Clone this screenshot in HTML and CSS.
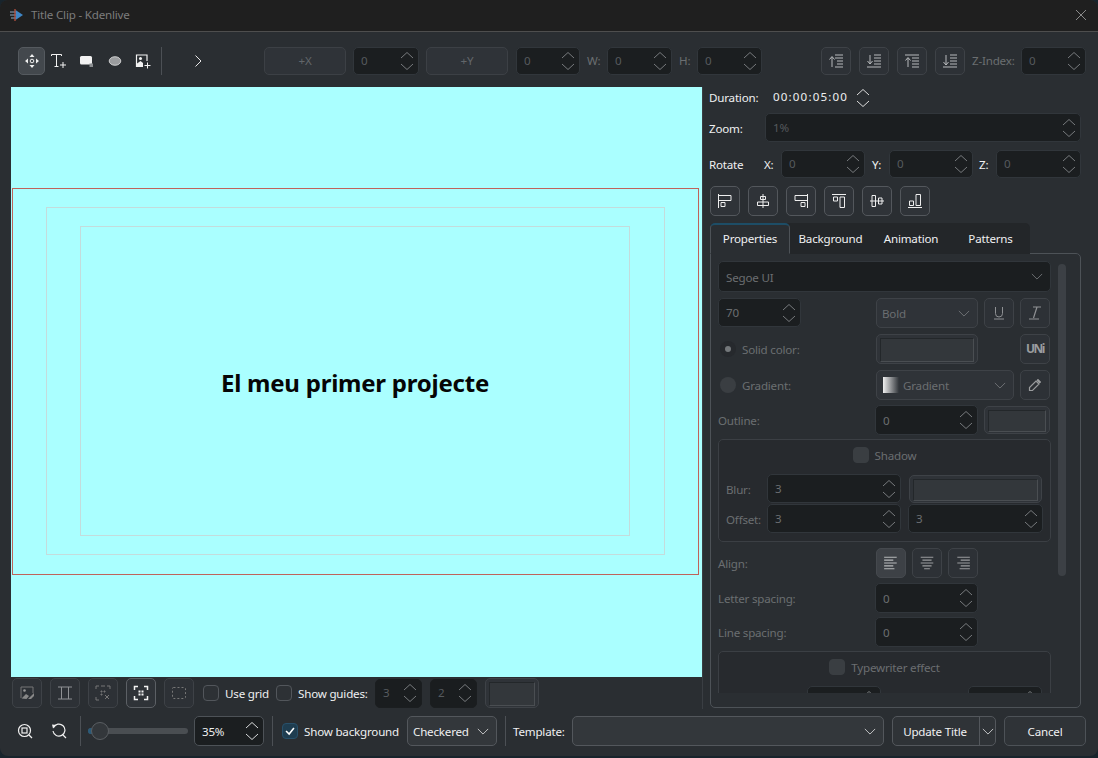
FILE: index.html
```html
<!DOCTYPE html>
<html lang="en">
<head>
<meta charset="utf-8">
<title>Title Clip - Kdenlive</title>
<link rel="stylesheet" href="styles.css">
</head>
<body>
<svg class="defs" aria-hidden="true">
  <symbol id="arrows" viewBox="0 0 14 22"><path d="M1 8 7 2.500 13 8M1 14 7 19.500 13 14" fill="none" stroke="currentColor"/></symbol>
  <symbol id="down" viewBox="0 0 14 8"><path d="M1 1 7 7 13 1" fill="none" stroke="currentColor"/></symbol>
</svg>
<div class="window">
  <header class="titlebar">
    <svg class="logo" viewBox="0 0 14 12"><path d="M0 3h7M0 6h7M1 9h6" stroke="#8fa9c4" stroke-width="1.200"/><path d="M5.500 1 13 6l-7.500 5z" fill="#3f86c6"/><path d="M5 0v12" stroke="#b5503f" stroke-width="1.300"/></svg>
    <span class="title">Title Clip - Kdenlive</span>
    <svg class="close" viewBox="0 0 10 10"><path d="M0 0 10 10M10 0 0 10" stroke="#8a8a8a" stroke-width="1"/></svg>
  </header>

  <div class="toolbar">
    <button class="tool on"><svg viewBox="0 0 16 16"><path d="M8 1 10.500 4h-5zM8 15 5.500 12h5zM1 8 4 5.500v5zM15 8 12 10.500v-5z" fill="#eee"/><circle cx="8" cy="8" r="1.800" fill="none" stroke="#eee"/></svg></button>
    <button class="tool"><svg viewBox="0 0 16 16"><path d="M.5 3V1.500h10V3M5.500 1.500V13M3.500 13.500h4M9 12h6M12 9v6" fill="none" stroke="#f2f2f2"/></svg></button>
    <button class="tool"><svg viewBox="0 0 16 16"><rect x="1" y="3" width="12" height="8.500" rx="1.500" fill="#f2f2f2"/><rect x="10.500" y="10.500" width="3.500" height="3.500" fill="#8a8d90"/></svg></button>
    <button class="tool"><svg viewBox="0 0 16 16"><ellipse cx="8" cy="8" rx="5.800" ry="4.300" fill="#9a9c9e" stroke="#e4e4e4" stroke-width=".8"/></svg></button>
    <button class="tool"><svg viewBox="0 0 16 16"><path d="M1.500 14V2h10.500v6" fill="none" stroke="#f2f2f2" stroke-width="1.200"/><circle cx="5.500" cy="5.500" r="1.500" fill="#f2f2f2"/><path d="M2 14V10.500L5.500 8 8 10v4z" fill="#f2f2f2"/><path d="M9.500 12.500h6M12.500 9.500v6" stroke="#f2f2f2"/></svg></button>
    <i class="sep s4"></i>
    <button class="tool ml22"><svg viewBox="0 0 16 16"><path d="M5.500 2.500 11 8l-5.500 5.500" fill="none" stroke="#e8e8e8"/></svg></button>
    <button class="btn off w82 ml52">+X</button>
    <div class="spin w66 ml7"><span>0</span><svg><use href="#arrows"/></svg></div>
    <button class="btn off w82 ml7">+Y</button>
    <div class="spin w64 ml8"><span>0</span><svg><use href="#arrows"/></svg></div>
    <span class="lab dim w20 ml7">W:</span>
    <div class="spin w65"><span>0</span><svg><use href="#arrows"/></svg></div>
    <span class="lab dim w18 ml7">H:</span>
    <div class="spin w65"><span>0</span><svg><use href="#arrows"/></svg></div>
    <button class="ico off ml59"><svg viewBox="0 0 16 16"><path d="M7 2h8M7 5h8M9 8h6M9 11h6M7 14h8M4 14V4M1.500 6.500 4 3.500l2.500 3" fill="none" stroke="#b8babc"/></svg></button>
    <button class="ico off ml8"><svg viewBox="0 0 16 16"><path d="M8 2h7M8 5h7M8 8h7M8 11h7M1 14h14M4 2v9M1.500 8 4 11l2.500-3" fill="none" stroke="#b8babc"/></svg></button>
    <button class="ico off ml8"><svg viewBox="0 0 16 16"><path d="M1 2h14M8 5h7M8 8h7M8 11h7M8 14h7M4 14V5M1.500 7.500 4 4.500l2.500 3" fill="none" stroke="#b8babc"/></svg></button>
    <button class="ico off ml8"><svg viewBox="0 0 16 16"><path d="M8 2h7M8 5h7M8 8h7M8 11h7M1 14h14M4 2v10M1.500 9 4 12l2.500-3" fill="none" stroke="#b8babc"/></svg></button>
    <span class="lab dim w49 ml7">Z-Index:</span>
    <div class="spin w65"><span>0</span><svg><use href="#arrows"/></svg></div>
  </div>

  <div class="main">
    <section class="left">
      <div class="canvas">
        <div class="frame">
          <div class="guide">
            <div class="guide inner"><span class="headline">El meu primer projecte</span></div>
          </div>
        </div>
      </div>
      <div class="canvasbar">
        <button class="ico off"><svg viewBox="0 0 16 16"><path d="M2 13V2h12v6" fill="none" stroke="#777"/><circle cx="5.500" cy="5.500" r="1.300" fill="#999"/><path d="M2.500 13.500 7 9l3 2-2.500 3zM9 14l6-6v3l-3 3z" fill="#888"/></svg></button>
        <button class="ico off ml8"><svg viewBox="0 0 16 16"><path d="M1 2h14M1 14h14M4.500 2v12M11.500 2v12" fill="none" stroke="#8f9194"/></svg></button>
        <button class="ico off ml8"><svg viewBox="0 0 16 16"><path d="M1 4V1h3M12 1h3v3M1 12v3h3" fill="none" stroke="#777"/><path d="M6 1h4M6 6h1v1H6zM9 6h1v1H9zM6 9h1v1H6zM10 10l4 4M14 10l-4 4" fill="none" stroke="#777"/></svg></button>
        <button class="ico sel ml8"><svg viewBox="0 0 16 16"><path d="M1.500 5V1.500H5M11 1.500h3.500V5M1.500 11v3.500H5M11 14.500h3.500V11" fill="none" stroke="#f2f2f2" stroke-width="1.500"/><path d="M5.500 5.500h2v2h-2zM8.500 5.500h2v2h-2zM5.500 8.500h2v2h-2zM8.500 8.500h2v2h-2z" fill="#f2f2f2"/></svg></button>
        <button class="ico off ml8"><svg viewBox="0 0 16 16"><rect x="1.500" y="2.500" width="13" height="11" rx="1" fill="none" stroke="#777" stroke-dasharray="2 2"/></svg></button>
        <span class="check ml9"></span>
        <span class="lab w45 ml6">Use grid</span>
        <span class="check ml6"></span>
        <span class="lab w71 ml6">Show guides:</span>
        <div class="spin w47 ml6 sunk"><span>3</span><svg><use href="#arrows"/></svg></div>
        <div class="spin w47 ml8 sunk"><span>2</span><svg><use href="#arrows"/></svg></div>
        <div class="swatch w54 ml8"></div>
      </div>
    </section>

    <aside class="right">
      <div class="durrow">
        <span class="lab bright w64">Duration:</span>
        <span class="code">00:00:05:00</span>
        <svg class="durarrows"><use href="#arrows"/></svg>
      </div>
      <div class="zoomrow">
        <span class="lab bright w56">Zoom:</span>
        <div class="spin w316 h29"><span>1%</span><svg><use href="#arrows"/></svg></div>
      </div>
      <div class="rotrow">
        <span class="lab bright w55">Rotate</span>
        <span class="lab bright w17">X:</span>
        <div class="spin w84"><span>0</span><svg><use href="#arrows"/></svg></div>
        <span class="lab bright w17 ml7">Y:</span>
        <div class="spin w84"><span>0</span><svg><use href="#arrows"/></svg></div>
        <span class="lab bright w17 ml6">Z:</span>
        <div class="spin w85"><span>0</span><svg><use href="#arrows"/></svg></div>
      </div>
      <div class="alignrow">
        <button class="ico"><svg viewBox="0 0 16 16"><path d="M1.500 1v14M1.500 2.500H14v5H1.500M4 9.500h4v4H4z" fill="none" stroke="#eee"/></svg></button>
        <button class="ico"><svg viewBox="0 0 16 16"><path d="M8 1v14M5.500 3.500h5v3h-5zM2.500 9h11v3.500h-11z" fill="#2f3338" stroke="#eee"/></svg></button>
        <button class="ico"><svg viewBox="0 0 16 16"><path d="M14.500 1v14M14.500 2.500H2v5h12.500M8 9.500h4v4H8z" fill="none" stroke="#eee"/></svg></button>
        <button class="ico"><svg viewBox="0 0 16 16"><path d="M1 1.500h14M2.500 4h4v4h-4zM9 4h4.500v10.500H9z" fill="none" stroke="#eee"/></svg></button>
        <button class="ico"><svg viewBox="0 0 16 16"><path d="M1 8h14M3 2.500h3.500v11H3zM9.500 5H13v6H9.500z" fill="#2f3338" stroke="#eee"/></svg></button>
        <button class="ico"><svg viewBox="0 0 16 16"><path d="M1 14.500h14M2.500 8h4v4.500h-4zM9 1.500h4.500v11H9z" fill="none" stroke="#eee"/></svg></button>
      </div>
      <div class="tabs">
        <span class="tab active">Properties</span>
        <span class="tab t2">Background</span>
        <span class="tab t3">Animation</span>
        <span class="tab t4">Patterns</span>
      </div>
      <div class="tabpanel">
        <div class="scrollarea">
          <div class="form">
            <div class="combo dark h31"><span>Segoe UI</span><svg><use href="#down"/></svg></div>
            <div class="row">
              <div class="spin w82 h29"><span class="grey">70</span><svg><use href="#arrows"/></svg></div>
              <div class="combo off"><span>Bold</span><svg><use href="#down"/></svg></div>
              <button class="ico off"><svg viewBox="0 0 16 16"><path d="M4.500 2v6.500a3.500 3.500 0 0 0 7 0V2M3 14h10" fill="none" stroke="#8f9194"/></svg></button>
              <button class="ico off"><svg viewBox="0 0 16 16"><path d="M6 2h8M10 2 6.500 13M2 14h10" fill="none" stroke="#8f9194" stroke-width="1.200"/></svg></button>
            </div>
            <div class="row">
              <span class="optlabel"><i class="radio dotted"></i><span class="lab dim">Solid color:</span></span>
              <div class="swatch"></div>
              <i></i>
              <button class="ico off col4 un">UNi</button>
            </div>
            <div class="row">
              <span class="optlabel wide"><i class="radio"></i><span class="lab dim">Gradient:</span></span>
              <div class="combo off span2"><i class="grad"></i><span>Gradient</span><svg><use href="#down"/></svg></div>
              <button class="ico off"><svg viewBox="0 0 16 16"><path d="M2.500 13.500v-3L9 4l3 3-6.500 6.500zM10.500 2.500 13.500 5.500" fill="none" stroke="#9a9c9e" stroke-width="1.200"/><path d="M9.500 3.500 11 2l3 3-1.500 1.500z" fill="#9a9c9e"/></svg></button>
            </div>
            <div class="row mt5">
              <span class="lab dim">Outline:</span>
              <div class="spin outset"><span class="grey">0</span><svg><use href="#arrows"/></svg></div>
              <div class="swatch span2 thin"></div>
            </div>
            <div class="group mt4 shadow">
              <div class="grouphead"><span class="check off"></span><span class="lab dim">Shadow</span></div>
              <div class="shadowgrid">
                <span class="lab dim">Blur:</span>
                <div class="spin h29"><span class="grey">3</span><svg><use href="#arrows"/></svg></div>
                <div class="swatch thin"></div>
                <span class="lab dim">Offset:</span>
                <div class="spin h29"><span class="grey">3</span><svg><use href="#arrows"/></svg></div>
                <div class="spin h29"><span class="grey">3</span><svg><use href="#arrows"/></svg></div>
              </div>
            </div>
            <div class="row">
              <span class="lab dim">Align:</span>
              <div class="trio">
                <button class="ico sel2"><svg viewBox="0 0 14 12"><path d="M1 1h11M1 3.500h8M1 6h11M1 8.500h8M1 11h9" stroke="#b8babc" fill="none"/></svg></button>
                <button class="ico off"><svg viewBox="0 0 14 12"><path d="M1.500 1h11M3 3.500h8M1.500 6h11M3 8.500h8M4.500 11h5" stroke="#9a9c9e" fill="none"/></svg></button>
                <button class="ico off"><svg viewBox="0 0 14 12"><path d="M2 1h11M5 3.500h8M2 6h11M5 8.500h8M4 11h9" stroke="#9a9c9e" fill="none"/></svg></button>
              </div>
            </div>
            <div class="row mt5">
              <span class="lab dim">Letter spacing:</span>
              <div class="spin outset"><span class="grey">0</span><svg><use href="#arrows"/></svg></div>
            </div>
            <div class="row mt4">
              <span class="lab dim">Line spacing:</span>
              <div class="spin outset"><span class="grey">0</span><svg><use href="#arrows"/></svg></div>
            </div>
            <div class="group mt4 type">
              <div class="grouphead"><span class="check off"></span><span class="lab dim">Typewriter effect</span></div>
              <div class="typerow">
                <div class="spin w74"><span></span><svg><use href="#arrows"/></svg></div>
                <div class="spin w74"><span></span><svg><use href="#arrows"/></svg></div>
              </div>
            </div>
          </div>
          <div class="scrollbar"><i></i></div>
        </div>
      </div>
    </aside>
  </div>

  <footer class="bottom">
    <button class="tool plain"><svg viewBox="0 0 16 16"><circle cx="7.500" cy="7.500" r="6" fill="none" stroke="#f0f0f0" stroke-width="1.200"/><rect x="5" y="5" width="5" height="5" fill="none" stroke="#f0f0f0" stroke-width="1.200"/><path d="M12 12l3 3" stroke="#f0f0f0" stroke-width="1.200"/></svg></button>
    <button class="tool plain ml6"><svg viewBox="0 0 16 16"><path d="M2.500 4.500A6 6 0 1 1 2 8M12 12l3 3" fill="none" stroke="#f0f0f0" stroke-width="1.200"/><path d="M1 1.500 5.500 2 2 5.500z" fill="#f0f0f0"/></svg></button>
    <i class="sep s7"></i>
    <div class="slider ml7"><b class="fill"></b><b class="knob"></b></div>
    <div class="spin w70 ml6 live"><span>35%</span><svg><use href="#arrows"/></svg></div>
    <i class="sep s8"></i>
    <span class="check ticked ml9"><svg viewBox="0 0 16 16"><path d="M3.500 8 7 11.500 12.500 4.500" fill="none" stroke="#fff" stroke-width="1.800"/></svg></span>
    <span class="lab w96 ml6">Show background</span>
    <div class="combo w90 ml7"><span>Checkered</span><svg><use href="#down"/></svg></div>
    <i class="sep s8"></i>
    <span class="lab w52 ml7">Template:</span>
    <div class="combo w312 ml7"><span></span><svg><use href="#down"/></svg></div>
    <div class="split ml8"><span>Update Title</span><b><svg><use href="#down"/></svg></b></div>
    <button class="btn w82 ml8">Cancel</button>
  </footer>
</div>
</body>
</html>
```
FILE: styles.css
```css
* { box-sizing: border-box; }
html, body { margin: 0; height: 100%; background: #18242c; overflow: hidden; }
body { font: 11.6px/16px "Noto Sans", "Liberation Sans", sans-serif; letter-spacing: -.2px; color: #eff0f1; }
.defs { position: absolute; width: 0; height: 0; }
button { font: inherit; letter-spacing: inherit; color: inherit; padding: 0; margin: 0; }
svg { display: block; }

.window { width: 1098px; height: 756px; background: #2a2e32; border-radius: 8px; overflow: hidden; display: flex; flex-direction: column; }

.titlebar { height: 32px; flex: none; background: #1f1f1f; border-bottom: 1px solid #4e4e4e; display: flex; align-items: center; padding-left: 10px; }
.logo { width: 14px; height: 12px; margin-top: -2px; }
.title { margin-left: 7px; color: #7c7c7c; margin-top: -1px; }
.close { width: 10px; height: 10px; margin-left: auto; margin-right: 12px; margin-top: -2px; }

.toolbar { height: 55px; flex: none; display: flex; align-items: flex-start; padding: 15px 0 0 17px; }
.toolbar > .lab { height: 28px; line-height: 28px; }
.tool { width: 28px; height: 28px; flex: none; border: 1px solid transparent; border-radius: 5px; background: none; display: flex; align-items: center; justify-content: center; }
.tool svg { width: 16px; height: 16px; }
.tool.on { background: #43484d; border-color: #555a5f; width: 27px; margin: 0 0 0 1px; }
.tool.plain { height: 30px; }
.sep { display: block; width: 1px; height: 28px; background: #4c5055; flex: none; }
.s4 { margin-left: 4px; }
.s7 { margin-left: 7px; }
.s8 { margin-left: 8px; }

.btn { height: 28px; border: 1px solid #4d5257; border-radius: 5px; background: #31363b; text-align: center; flex: none; }
.btn.off { background: #2f3338; border-color: #3c4045; color: #62666a; }
.bottom .btn { height: 30px; background: #2f3337; padding-top: 2px; }

.ico { width: 30px; height: 30px; flex: none; border: 1px solid #53575c; border-radius: 5px; background: #2f3338; display: flex; align-items: center; justify-content: center; }
.ico svg { width: 16px; height: 16px; }
.ico.off { border-color: #3e4247; background: #2d3136; }
.ico.sel { border-color: #5c6065; background: #2f3338; }
.ico.sel2 { border-color: #45494e; background: #3d4146; }
.toolbar .ico { height: 28px; }

.spin { height: 28px; flex: none; background: #1b1e20; border: 1px solid #31363b; border-radius: 5px; display: flex; align-items: center; padding-left: 7px; color: #565a5e; }
.spin span { flex: 1; }
.spin svg { width: 14px; height: 22px; margin-right: 4px; color: #777a7d; flex: none; }
.spin .grey { color: #6b6e71; }
.spin.sunk { height: 29px; border-color: #1b1e20; background: #1a1d1f; }
.spin.live { height: 30px; border-color: #4d5257; color: #eff0f1; padding-left: 7px; }
.spin.live svg { color: #d8dadb; }

.combo { height: 30px; flex: none; background: #33373b; border: 1px solid #53575c; border-radius: 5px; display: flex; align-items: center; padding-left: 5px; }
.combo > span { flex: 1; white-space: nowrap; margin-top: 2px; }
.combo > svg { width: 12px; height: 7px; margin-right: 7px; flex: none; color: #d8dadb; }
.combo.off { background: #2f3338; border-color: #3e4247; color: #6b6e71; }
.combo.off > svg { color: #777a7d; }
.combo.dark { background: #1b1e20; border-color: #31363b; color: #6b6e71; padding-left: 7px; }
.combo.dark > svg { color: #777a7d; }
.grad { width: 16px; height: 16px; margin: 0 4px 0 1px; background: linear-gradient(90deg, #f0f0f0, #2f3338); flex: none; }

.lab { white-space: nowrap; flex: none; display: block; margin-top: 2px; }
.toolbar > .lab { margin-top: 0; }
.durrow .lab { margin-top: 0; }
.form .spin span, .bottom .spin span { margin-top: 1px; }
.dim { color: #6b6e71; }
.bright { color: #eff0f1; }

.swatch { height: 30px; border: 1px solid #3e4247; border-radius: 5px; background: #2f3338; padding: 3px; }
.swatch.thin { height: 28px; }
.swatch::after { content: ""; display: block; height: 100%; background: #33373b; border: 1px solid #23272a; border-bottom-color: #4a4e52; border-right-color: #4a4e52; }

.main { display: flex; flex: none; height: 622px; padding-left: 11px; }
.left { width: 692px; flex: none; border-right: 1px solid #3a3e43; display: flex; flex-direction: column; }
.canvas { width: 691px; height: 590px; flex: none; background: #aaffff; padding: 102px 0 0 1px; }
.frame { width: 687px; height: 387px; border: 1px solid #c0635a; padding: 17px 33px; margin-top: -1px; }
.guide { width: 619px; height: 348px; border: 1px solid #c4dcdc; padding: 18px 33px; margin-top: 1px; }
.guide.inner { width: 550px; height: 310px; padding: 0; margin-top: 0; display: flex; align-items: center; justify-content: center; }
.headline { font: 700 24px/30px "Noto Sans", sans-serif; color: #060606; letter-spacing: -.23px; margin-top: 3px; white-space: nowrap; }
.canvasbar { display: flex; align-items: center; height: 30px; margin-top: 1px; padding-left: 1px; }
.canvasbar .lab { margin-top: 1px; }

.check { width: 16px; height: 16px; flex: none; display: block; border: 1px solid #52565b; border-radius: 4px; background: #2d3135; }
.check.off { border-color: #3a3e42; background: #3a3e42; }
.check.ticked { background: #1f3d50; border-color: #28506a; }
.check svg { width: 14px; height: 14px; }

.right { padding-left: 6px; width: 380px; flex: none; }
.durrow { height: 21px; display: flex; align-items: center; }
.code { letter-spacing: 1.150px; width: 83px; margin-top: -1px; }
.durarrows { width: 14px; height: 22px; color: #dcdcdc; }
.zoomrow { display: flex; align-items: center; margin-top: 5px; }
.rotrow { display: flex; align-items: center; margin-top: 8px; }
.alignrow { display: flex; gap: 8px; margin: 8px 0 0 1px; }
.tabs { display: flex; width: 320px; height: 31px; margin: 7px 0 -1px 1px; background: #232629; border-radius: 5px 5px 0 0; position: relative; z-index: 1; }
.tab { height: 31px; line-height: 31px; text-align: center; white-space: nowrap; }
.tab.active { width: 80px; background: #2a2e32; border: 1px solid #4d5257; border-top: 2px solid #1d4d66; border-bottom-color: #2a2e32; border-radius: 5px 5px 0 0; line-height: 28px; }
.t2 { width: 81px; }
.t3 { width: 80px; }
.t4 { width: 79px; }
.tabpanel { width: 371px; height: 455px; margin-left: 1px; border: 1px solid #4d5257; border-radius: 0 5px 5px 5px; }
.scrollarea { display: flex; height: 439px; overflow: hidden; padding: 7px 0 0 7px; }
.form { width: 333px; flex: none; display: flex; flex-direction: column; gap: 6px; }
.row { display: grid; grid-template-columns: 152px 102px 30px 30px; column-gap: 6px; align-items: center; height: 30px; flex: none; }
.row > .spin:first-child { width: 83px; margin-top: -1px; }
.row > .outset { margin-left: -1px; width: 103px; height: 30px; }
.span2 { grid-column: span 2; }
.col4 { grid-column: 4; }
.mt5 { margin-top: -1px; }
.mt4 { margin-top: -2px; }
.form .h31 { height: 31px; flex: none; }
.h29 { height: 29px; }
.optlabel { display: flex; align-items: center; }
.radio { display: block; width: 16px; height: 16px; border-radius: 50%; background: #26292d; margin: 0 6px 0 2px; flex: none; position: relative; }
.optlabel.wide .radio { background: #3a3e42; }
.radio.dotted::after { content: ""; position: absolute; left: 5px; top: 5px; width: 6px; height: 6px; border-radius: 50%; background: #74787b; }
.un { color: #9a9c9e; font-size: 12px; font-weight: 700; letter-spacing: -1.500px; }
.group { width: 333px; flex: none; background: #272a2e; border: 1px solid #3b3f44; border-radius: 5px; }
.shadow { height: 103px; }
.type { height: 80px; }
.grouphead { display: flex; justify-content: center; align-items: center; gap: 6px; height: 16px; margin-top: 7px; }
.shadowgrid { display: grid; grid-template-columns: 41px 134px 142px; margin: 11px 0 0 7px; row-gap: 1px; align-items: center; }
.shadowgrid > :nth-child(3) { margin: 0 1px 0 8px; }
.shadowgrid > :nth-child(6) { margin: 0 0 0 7px; }
.typerow { display: flex; margin: 11px 0 0 88px; gap: 87px; }
.trio { display: flex; gap: 6px; }
.scrollbar { margin: 3px 0 0 7px; width: 8px; }
.scrollbar i { display: block; width: 8px; height: 312px; background: #3c4045; border-radius: 4px; }

.bottom { display: flex; align-items: center; height: 30px; margin-top: 7px; padding-left: 11px; }
.bottom .sep { height: 30px; }
.slider { width: 100px; height: 6px; background: #4a4e52; border-radius: 3px; position: relative; flex: none; }
.fill { position: absolute; left: 0; top: 0; width: 10px; height: 6px; border-radius: 3px; background: #2a5a78; }
.knob { position: absolute; left: 3px; top: -6px; width: 18px; height: 18px; border-radius: 50%; background: #33373b; border: 1px solid #5a5e62; }
.split { width: 104px; height: 30px; flex: none; display: flex; align-items: center; border: 1px solid #53575c; border-radius: 5px; background: #2f3337; }
.split span { width: 84px; text-align: center; white-space: nowrap; margin: 2px 2px 0 0; }
.split b { flex: 1; height: 100%; border-left: 1px solid #53575c; display: flex; align-items: center; justify-content: center; }
.split svg { width: 12px; height: 7px; color: #d8dadb; }

.w17 { width: 17px; } .w18 { width: 18px; } .w20 { width: 20px; } .w45 { width: 45px; } .w47 { width: 47px; }
.w49 { width: 49px; } .w52 { width: 52px; } .w54 { width: 54px; } .w55 { width: 55px; } .w56 { width: 56px; }
.w64 { width: 64px; } .w65 { width: 65px; } .w66 { width: 66px; } .w70 { width: 70px; } .w71 { width: 71px; }
.w74 { width: 74px; } .w82 { width: 82px; } .w84 { width: 84px; } .w85 { width: 85px; } .w90 { width: 90px; }
.w96 { width: 96px; } .w312 { width: 312px; } .w316 { width: 316px; }
.ml6 { margin-left: 6px; } .ml7 { margin-left: 7px; } .ml8 { margin-left: 8px; } .ml9 { margin-left: 9px; }
.ml22 { margin-left: 22px; } .ml52 { margin-left: 52px; } .ml59 { margin-left: 59px; }
```
